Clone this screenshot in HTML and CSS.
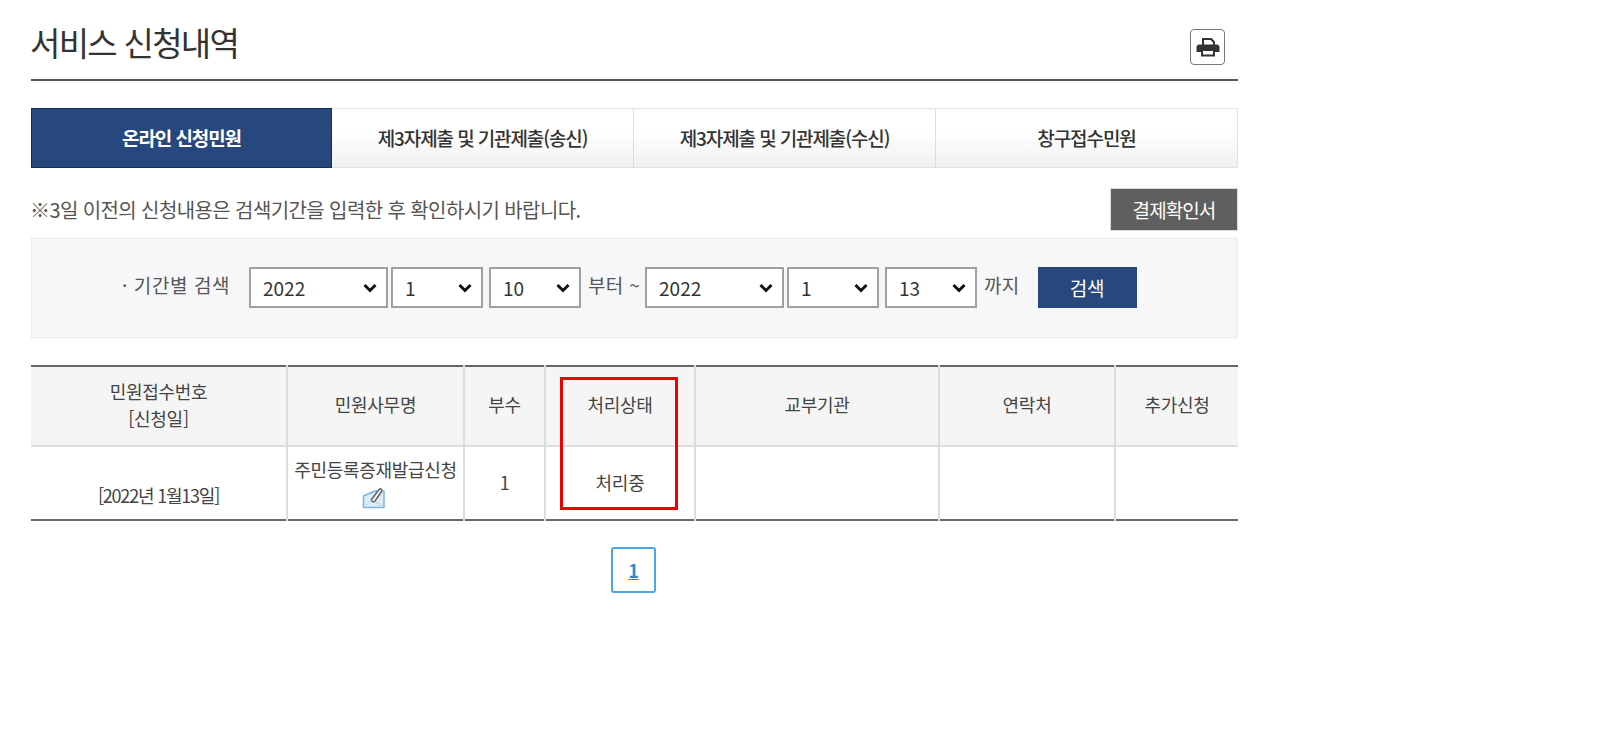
FILE: index.html
```html
<!DOCTYPE html>
<html lang="ko">
<head>
  <meta charset="UTF-8">
  <title>서비스 신청내역</title>
  <link rel="stylesheet" href="styles.css">
</head>
<body>

<div class="container">
  <div class="title-bar">
    <h1>서비스 신청내역</h1>
    <a class="print-btn" href="#" aria-label="인쇄">
      <svg width="24" height="20" viewBox="0 0 24 20">
        <path d="M6 8V1h9.500L19 4.500V8h-2V5.500L14.500 3H8v5z" fill="#333"/>
        <path d="M3.500 7.500h17a3 3 0 0 1 3 3V15H19v-3H5v3H.5v-4.500a3 3 0 0 1 3-3z" fill="#333"/>
        <path d="M5 12h14v7.500H5zM7 14v3.500h10V14z" fill="#333" fill-rule="evenodd"/>
      </svg>
    </a>
  </div>

  <ul class="tabs">
    <li class="tab active">온라인 신청민원</li>
    <li class="tab">제3자제출 및 기관제출(송신)</li>
    <li class="tab">제3자제출 및 기관제출(수신)</li>
    <li class="tab">창구접수민원</li>
  </ul>

  <div class="notice-row">
    <p class="notice">※3일 이전의 신청내용은 검색기간을 입력한 후 확인하시기 바랍니다.</p>
    <button class="btn-receipt">결제확인서</button>
  </div>

  <div class="search-box">
    <span class="search-label">· 기간별 검색</span>
    <select class="sel-year"><option>2022</option></select>
    <select class="sel-small"><option>1</option></select>
    <select class="sel-small"><option>10</option></select>
    <span class="search-text">부터 ~</span>
    <select class="sel-year"><option>2022</option></select>
    <select class="sel-small"><option>1</option></select>
    <select class="sel-small"><option>13</option></select>
    <span class="search-text">까지</span>
    <button class="btn-search">검색</button>
  </div>

  <div class="table-wrap">
    <table class="list">
      <colgroup>
        <col class="col-no">
        <col class="col-name">
        <col class="col-count">
        <col class="col-state">
        <col class="col-org">
        <col class="col-tel">
        <col class="col-add">
      </colgroup>
      <thead>
        <tr>
          <th>민원접수번호<br>[신청일]</th>
          <th>민원사무명</th>
          <th>부수</th>
          <th>처리상태</th>
          <th>교부기관</th>
          <th>연락처</th>
          <th>추가신청</th>
        </tr>
      </thead>
      <tbody>
        <tr>
          <td class="date-cell">[2022년 1월13일]</td>
          <td class="name-cell">주민등록증재발급신청<br>
            <svg class="memo-icon" width="26" height="22" viewBox="0 0 24 22">
              <path d="M1.500 9L13 4h9v16.500H1.500z" fill="#dcecf8" stroke="#7db2de" stroke-width="1.500" stroke-linejoin="round"/>
              <path d="M2 20l8-7 12 7" fill="none" stroke="#b5d3ec"/>
              <path d="M9.500 12.500L17 2.500c1.500-1.500 3.500 0 2.500 2l-6.500 9.500c-1.500 1.500-4 .500-3.500-1.500z" fill="#fff" stroke="#666" stroke-width="1.600"/>
            </svg>
          </td>
          <td>1</td>
          <td>처리중</td>
          <td></td>
          <td></td>
          <td></td>
        </tr>
      </tbody>
    </table>
    <div class="red-mark"></div>
  </div>

  <div class="paging">
    <a class="page-num" href="#">1</a>
  </div>
</div>

</body>
</html>
```

FILE: styles.css
```css
body {
  font-family: "Noto Sans CJK KR", "Noto Sans", sans-serif;
  margin: 0;
  padding: 0;
  background-color: #fff;
  color: #444;
}

.container {
  width: 1207px;
  margin-left: 31px;
}

/* Title */
.title-bar {
  display: flex;
  justify-content: space-between;
  height: 79px;
  border-bottom: 2px solid #555;
}

.title-bar h1 {
  margin: 17px 0 0 -1px;
  font-size: 33px;
  line-height: 50px;
  font-weight: 400;
  letter-spacing: -1.7px;
  color: #333;
}

.print-btn {
  display: flex;
  align-items: center;
  justify-content: center;
  width: 33px;
  height: 34px;
  margin: 29px 13px 0 0;
  border: 1px solid #777;
  border-radius: 4px;
  background-color: #fff;
}

/* Tabs */
.tabs {
  display: flex;
  list-style: none;
  margin: 27px 0 0;
  padding: 0;
  height: 60px;
  border: 1px solid #e2e2e2;
  border-left: 0;
  box-sizing: border-box;
}

.tab {
  flex: 1 1 0;
  box-sizing: border-box;
  display: flex;
  align-items: center;
  justify-content: center;
  background: linear-gradient(#fff 40%, #f0f0f0);
  border-right: 1px solid #dcdcdc;
  font-size: 19px;
  font-weight: 500;
  letter-spacing: -1.1px;
  color: #333;
  padding-bottom: 2px;
}

.tab:last-child {
  border-right: 0;
}

.tab.active {
  flex: 0 0 301px;
  margin: -1px 0 -1px 0;
  background: #27487c;
  border: 1px solid #12305c;
  color: #fff;
  font-weight: 700;
}

/* Notice */
.notice-row {
  display: flex;
  justify-content: space-between;
  align-items: center;
  margin-top: 20px;
}

.notice {
  margin: 0 0 0 -1px;
  font-size: 20px;
  letter-spacing: -0.6px;
  color: #555;
}

.btn-receipt {
  width: 128px;
  height: 43px;
  border: 1px solid #ddd;
  background-color: #5f5f5f;
  color: #fff;
  font-family: inherit;
  font-size: 19px;
  letter-spacing: -0.9px;
}

/* Search */
.search-box {
  display: flex;
  align-items: flex-start;
  height: 100px;
  margin-top: 7px;
  padding: 28px 0 0 90px;
  box-sizing: border-box;
  background-color: #f7f7f9;
  border: 1px solid #ececec;
}

.search-box select {
  appearance: none;
  height: 41px;
  padding-left: 12px;
  border: 2px solid #a0a0a0;
  background: #fff url("data:image/svg+xml,%3Csvg xmlns='http://www.w3.org/2000/svg' width='14' height='10'%3E%3Cpath d='M1.500 2l5.500 5.500L12.500 2' fill='none' stroke='%23111' stroke-width='3'/%3E%3C/svg%3E") no-repeat right 9px center;
  color: #333;
  font-family: inherit;
  font-size: 19px;
}

.search-label {
  width: 127px;
  font-size: 19px;
  line-height: 36px;
  letter-spacing: 0.6px;
  color: #555;
}

.search-text {
  font-size: 19px;
  line-height: 36px;
  letter-spacing: 0.3px;
  color: #555;
  margin: 0 5px 0 2px;
}

.sel-year {
  width: 139px;
  margin-right: 3px;
}

.sel-small {
  width: 92px;
  margin-right: 6px;
}

.sel-small + .sel-small {
  margin-right: 5px;
}

.btn-search {
  width: 99px;
  height: 41px;
  margin-left: 13px;
  border: 0;
  background-color: #27487c;
  color: #fff;
  font-family: inherit;
  font-size: 19px;
}

/* Table */
.table-wrap {
  position: relative;
  margin-top: 27px;
}

.list {
  width: 100%;
  table-layout: fixed;
  border-collapse: collapse;
  border-top: 2px solid #666;
  border-bottom: 2px solid #666;
  font-size: 18px;
  letter-spacing: -0.3px;
  color: #444;
}

.col-no { width: 256px; }
.col-name { width: 177px; }
.col-count { width: 81px; }
.col-state { width: 150px; }
.col-org { width: 244px; }
.col-tel { width: 176px; }
.col-add { width: 123px; }

.list th {
  height: 80px;
  padding: 0 0 3px;
  box-sizing: border-box;
  background-color: #f5f5f5;
  border-left: 2px solid #ddd;
  border-bottom: 2px solid #ddd;
  font-weight: 400;
  line-height: 27px;
}

.list td {
  height: 74px;
  padding: 0 0 3px;
  box-sizing: border-box;
  border-left: 2px solid #ddd;
  text-align: center;
  line-height: 26px;
}

.list th:first-child,
.list td:first-child {
  border-left: 0;
}

.list td.date-cell {
  vertical-align: bottom;
  padding-bottom: 11px;
  letter-spacing: -1.2px;
}

.list td.name-cell {
  vertical-align: top;
  padding-top: 9px;
}

.memo-icon {
  vertical-align: top;
  margin-top: 5px;
  margin-right: 3px;
}

.red-mark {
  position: absolute;
  left: 529px;
  top: 12px;
  width: 112px;
  height: 127px;
  border: 3px solid #f00000;
}

/* Paging */
.paging {
  display: flex;
  justify-content: center;
  margin-top: 26px;
}

.page-num {
  display: flex;
  align-items: center;
  justify-content: center;
  width: 41px;
  height: 42px;
  margin-right: 2px;
  border: 2px solid #4aa8e8;
  border-radius: 3px;
  color: #1f8fd8;
  font-size: 18px;
  font-weight: 700;
}
```
